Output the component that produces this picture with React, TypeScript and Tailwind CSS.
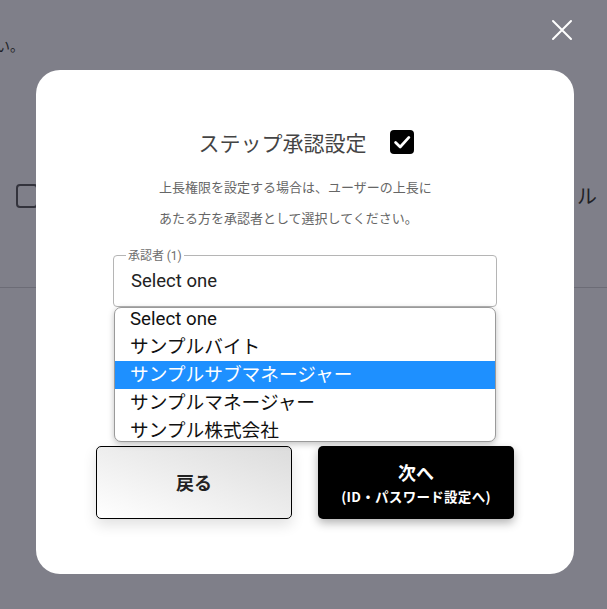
import React from 'react';

const options = [
  'Select one',
  'サンプルバイト',
  'サンプルサブマネージャー',
  'サンプルマネージャー',
  'サンプル株式会社',
];

export default function App() {
  const selected = 2;

  return (
    <div
      className="relative w-[607px] h-[609px] overflow-hidden bg-[#7f7f89]"
      style={{ fontFamily: '"Noto Sans CJK JP", "Noto Sans", sans-serif' }}
    >
      {/* Page behind the overlay */}
      <div className="flex flex-col">
        <p className="pt-[33px] -ml-[4px] text-[14px] leading-[24px] text-[#1f1f26]">い。</p>
        <div className="mt-[124px] flex items-center justify-between pl-[16px] pr-[10px]">
          <div className="w-[22px] h-[24px] rounded-[4px] border-2 border-[#33333c]" />
          <span className="text-[20px] text-[#1f1f26]">ル</span>
        </div>
        <div className="mt-[76px] border-b border-[#6c6c76]" />
      </div>

      {/* Close */}
      <button className="absolute left-[550px] top-[18px] w-[24px] h-[24px]">
        <svg viewBox="0 0 24 24" width="24" height="24">
          <path d="M3 3 L21 21 M21 3 L3 21" stroke="#ffffff" strokeWidth="2" strokeLinecap="round" />
        </svg>
      </button>

      {/* Modal */}
      <div className="absolute left-[36px] top-[70px] w-[538px] h-[504px] rounded-[24px] bg-white flex flex-col items-center pt-[57px]">
        <div className="flex items-center gap-[23px] pl-[2px]">
          <h2 className="text-[21px] leading-[30px] text-[#444444]">ステップ承認設定</h2>
          <div className="w-[24px] h-[24px] rounded-[4px] bg-black flex items-center justify-center">
            <svg viewBox="0 0 24 24" width="22" height="22">
              <path d="M5 12.5 L10 17.5 L19.5 7" fill="none" stroke="#ffffff" strokeWidth="3" strokeLinecap="round" strokeLinejoin="round" />
            </svg>
          </div>
        </div>

        <div className="mt-[14px] w-[292px] text-[13px] leading-[31px] text-[#666666]">
          <p>上長権限を設定する場合は、ユーザーの上長に</p>
          <p>あたる方を承認者として選択してください。</p>
        </div>

        <div className="relative mt-[17px]">
          <fieldset className="w-[384px] h-[57px] rounded-[4px] border border-[#b5b5b5] px-[12px]">
            <legend className="px-[2px] text-[12px] leading-[10px] text-[#6e6e6e]">
              承認者 <span style={{ fontFamily: 'Roboto, sans-serif' }}>(1)</span>
            </legend>
            <div
              className="pl-[5px] pt-[8px] text-[18.5px] leading-[24px] text-[#222222]"
              style={{ fontFamily: 'Roboto, "Noto Sans CJK JP", sans-serif' }}
            >
              Select one
            </div>
          </fieldset>

          {/* Open dropdown */}
          <div className="absolute left-[1px] top-[57px] w-[382px] h-[135px] overflow-hidden rounded-[7px] border border-[#9a9a9a] bg-white shadow-[0_2px_6px_rgba(0,0,0,0.25)]">
            <ul className="-mt-[3px]" style={{ fontFamily: 'Roboto, "Noto Sans CJK JP", sans-serif' }}>
              {options.map((o, i) => (
                <li
                  key={o}
                  className={
                    i === selected
                      ? 'h-[28px] pl-[15px] text-[18.7px] leading-[28px] bg-[#1e90ff] text-white'
                      : 'h-[28px] pl-[15px] text-[18.7px] leading-[28px] text-[#111111]'
                  }
                >
                  {o}
                </li>
              ))}
            </ul>
          </div>
        </div>

        <div className="mt-[139px] flex gap-[26px]">
          <button className="w-[196px] h-[73px] rounded-[5px] border border-black bg-gradient-to-tr from-white to-[#dcdcdc] shadow-[0_6px_14px_rgba(0,0,0,0.12)] text-[18px] font-bold text-[#222222]">
            戻る
          </button>
          <button className="w-[196px] h-[73px] rounded-[5px] bg-black shadow-[0_4px_10px_rgba(0,0,0,0.3)] flex flex-col items-center justify-center text-white font-bold">
            <span className="text-[18px] leading-[24px]">次へ</span>
            <span className="mt-[3px] text-[13.5px] leading-[18px] tracking-[0.3px]">(ID・パスワード設定へ)</span>
          </button>
        </div>
      </div>
    </div>
  );
}
